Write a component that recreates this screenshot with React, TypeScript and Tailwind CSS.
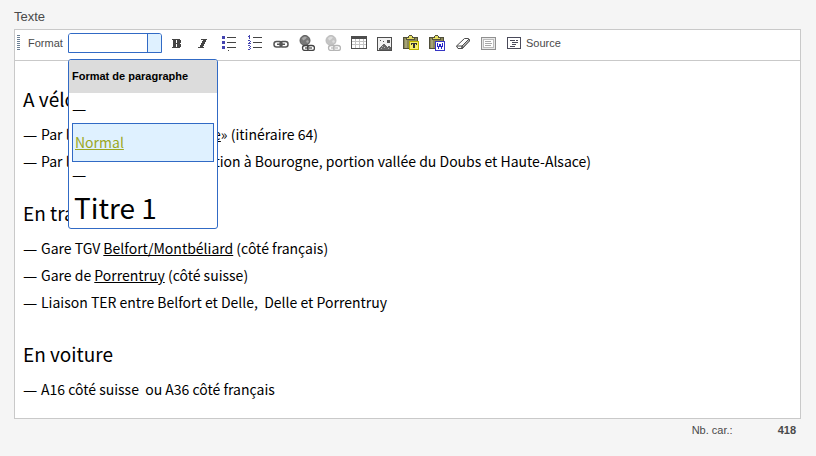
import React, { useState } from 'react';

type IconProps = { children: React.ReactNode };

function Icon({ children }: IconProps) {
  return (
    <svg width="16" height="16" viewBox="0 0 16 16" fill="none" shapeRendering="crispEdges" aria-hidden="true">
      {children}
    </svg>
  );
}

function Globe({ muted = false }: { muted?: boolean }) {
  const dark = muted ? '#b5b5b5' : '#444444';
  return (
    <g shapeRendering="auto">
      <circle cx="6" cy="5.5" r="5" fill={muted ? '#c4c4c4' : '#777777'} stroke={muted ? '#bbbbbb' : '#5a5a5a'} />
      <path d="M3 3l3-1.5 2 1-2 2-2 1zM7 6l2-1 1 2-2 1z" fill={muted ? '#dddddd' : '#a8a8a8'} />
      <rect x="3.5" y="10.5" width="7" height="5" rx="2.5" fill="#ffffff" stroke={dark} strokeWidth="1.3" />
      <rect x="8.5" y="10.5" width="7" height="5" rx="2.5" fill="#ffffff" stroke={dark} strokeWidth="1.3" />
      <path d="M6 13h7" stroke={dark} strokeWidth="1.2" />
    </g>
  );
}

function Clipboard() {
  return (
    <>
      <path d="M.5 2.5h14v11H.5z" fill="#8a8858" stroke="#4f4e3a" />
      <path d="M2 4h2v9H2z" fill="#a5a377" />
      <path d="M3 3h2V1h1V0h3v1h1v2h2v2H3z" fill="#55533a" />
      <path d="M4 3h7v1H4zM6 1h3v2H6z" fill="#e6df62" />
    </>
  );
}

const tools = [
  {
    label: 'Gras',
    icon: (
      <path
        d="M3 4h8v1h1v3h-1v1h1v3h-1v1H3v-1h1V5H3zM7 5v3h1V5zM7 9v3h1V9z"
        fill="#444444"
        fillRule="evenodd"
      />
    ),
  },
  {
    label: 'Italique',
    icon: <path d="M6 4h6v1h-1v2h-1v2H9v2H8v1h1v1H3v-1h2v-2h1V8h1V6h1V5H6z" fill="#444444" />,
  },
  {
    label: 'Liste à puces',
    icon: (
      <>
        <path d="M1 1h3v3H1zM1 6h3v3H1zM1 11h3v3H1z" fill="#4444b0" />
        <path d="M6 2h9v1H6zM6 7h9v1H6zM6 12h9v1H6zM7 15h1v1H7z" fill="#444444" />
      </>
    ),
  },
  {
    label: 'Liste numérotée',
    icon: (
      <>
        <path
          d="M2 0h1v4H2zM1 1h1v1H1zM1 5h2v1H1zM3 6h1v1H3zM2 7h1v1H2zM1 8h3v1H1zM1 10h2v1H1zM3 11h1v1H3zM2 12h1v1H2zM3 13h1v1H3zM1 14h2v1H1z"
          fill="#4444b0"
        />
        <path d="M6 2h9v1H6zM6 7h9v1H6zM6 12h9v1H6z" fill="#444444" />
      </>
    ),
  },
  {
    label: 'Lien',
    icon: (
      <g stroke="#555555" strokeWidth="1.5" shapeRendering="auto">
        <rect x="1" y="6.5" width="8" height="5.5" rx="2.5" />
        <rect x="7" y="6.5" width="8" height="5.5" rx="2.5" />
        <path d="M4 9.25h8" />
      </g>
    ),
  },
  { label: 'Lien externe', icon: <Globe /> },
  { label: 'Supprimer le lien', icon: <Globe muted /> },
  {
    label: 'Tableau',
    icon: (
      <>
        <path d="M0 1h16v13H0z" fill="#4d4d4d" />
        <path d="M1 4h14v9H1z" fill="#c4c4c4" />
        <path
          d="M1 4h3v2H1zM5 4h3v2H5zM9 4h3v2H9zM13 4h2v2h-2zM1 7h3v2H1zM5 7h3v2H5zM9 7h3v2H9zM13 7h2v2h-2zM1 10h3v3H1zM5 10h3v3H5zM9 10h3v3H9zM13 10h2v3h-2z"
          fill="#ffffff"
        />
      </>
    ),
  },
  {
    label: 'Image',
    icon: (
      <>
        <path d="M.5 2.5h14v13H.5z" fill="#f1f1f1" stroke="#4d4d4d" />
        <path d="M2 15v-2h1v-1h1v-1h1v-1h1V9h2v1h1v1h1v1h1v-1h2v1h1v3z" fill="#666666" />
        <path d="M5 11h1v1H5zM7 12h1v1H7zM11 13h1v1h-1zM4 13h1v1H4z" fill="#b0b0b0" />
        <path d="M10 5h3v3h-3zM3 5h1v1H3zM6 6h1v1H6z" fill="#555555" />
      </>
    ),
  },
  {
    label: 'Coller comme texte',
    icon: (
      <>
        <Clipboard />
        <path d="M6.5 6.5h9v8h-9z" fill="#f7f06a" stroke="#b8b000" />
        <path d="M8 8h6v2h-1V9h-1v4h-2V9H9v1H8z" fill="#333333" />
      </>
    ),
  },
  {
    label: 'Coller de Word',
    icon: (
      <>
        <Clipboard />
        <path d="M6.5 6.5h9v9h-9z" fill="#ffffff" stroke="#3535c4" />
        <path d="M8 8h1v3h1V9h2v2h1V8h1v4h-1v2h-1v-2h-2v2H9v-2H8z" fill="#2424c8" />
      </>
    ),
  },
  {
    label: 'Supprimer la mise en forme',
    icon: (
      <g stroke="#4d4d4d" shapeRendering="auto">
        <path d="M9.5 3.5h4l1 2-7 8H3L1.5 11z" fill="#ffffff" />
        <path d="M7 11l7-7 .5 2L7 13.5z" fill="#bcbcbc" />
        <path d="M1.5 11H7v2.5" />
      </g>
    ),
  },
  {
    label: 'Afficher les blocs',
    icon: (
      <>
        <path d="M.5 2.5h14v12H.5z" fill="#e8e8e8" stroke="#909090" />
        <path d="M2.5 4.5h10v8h-10z" fill="#ffffff" stroke="#bcbcbc" />
        <path d="M4 6h6v1H4zM4 8h7v1H4zM4 10h6v1H4z" fill="#a8a8a8" />
      </>
    ),
  },
];

const sections = [
  {
    title: 'A vélo',
    items: [
      <>
        Par la via <a href="#francovelosuisse" className="underline">«Francovélosuisse</a>» (itinéraire 64)
      </>,
      <>Par l'Eurovéloroute 6 (jonction à Bourogne, portion vallée du Doubs et Haute-Alsace)</>,
    ],
  },
  {
    title: 'En train',
    items: [
      <>
        Gare TGV <a href="#belfort" className="underline">Belfort/Montbéliard</a> (côté français)
      </>,
      <>
        Gare de <a href="#porrentruy" className="underline">Porrentruy</a> (côté suisse)
      </>,
      <>Liaison TER entre Belfort et Delle,&nbsp; Delle et Porrentruy</>,
    ],
  },
  {
    title: 'En voiture',
    items: [<>A16 côté suisse&nbsp; ou A36 côté français</>],
  },
];

const contentFont = 'font-["Noto_Sans_CJK_SC",Lato,sans-serif]';

function FormatPanel({ onPick }: { onPick: (value: string) => void }) {
  return (
    <div
      className={`absolute left-0 top-[26px] z-10 w-[150px] overflow-hidden rounded-[3px] border border-[#316ac5] bg-white text-black ${contentFont}`}
    >
      <h2 className='bg-[#dcdcdc] px-[3px] font-["Liberation_Sans",Arial,sans-serif] text-[11px] font-bold leading-[33px]'>
        Format de paragraphe
      </h2>
      <ul className="px-[3px]">
        <li>
          <span className="block text-[16px] leading-[30px]">—</span>
          <button
            onClick={() => onPick('Normal')}
            className="block w-full border border-[#316ac5] bg-[#dff1ff] px-[2px] text-left text-[14px] leading-[37px] text-[#9ba823] underline"
          >
            Normal
          </button>
        </li>
        <li>
          <span className="block text-[16px] leading-[25px]">—</span>
          <button onClick={() => onPick('Titre 1')} className="block w-full px-[2px] text-left text-[28px] leading-[41px]">
            Titre 1
          </button>
        </li>
      </ul>
    </div>
  );
}

export default function App() {
  const [format, setFormat] = useState('');

  return (
    <div className='min-h-screen bg-[#f5f5f5] px-[14px] pt-2 font-["Liberation_Sans",Arial,sans-serif] text-[#4a4a4a]'>
      <h1 className="pb-[3px] text-[13px] leading-[18px]">Texte</h1>

      <div className="mr-px border border-[#c9c9c9] bg-white">
        {/* Toolbar */}
        <div className="flex h-[31px] items-center border-b border-[#c9c9c9] pb-1 pl-[2px] text-[11px]">
          <span className="mr-2 h-4 w-[3px] bg-[repeating-linear-gradient(#6b7f94_0_1px,#ffffff_1px_2px)]" />
          <label htmlFor="format" className="mr-[6px] w-[34px]">
            Format
          </label>
          <div className="relative mr-[2px]">
            <div className="flex h-5 w-[94px] overflow-hidden rounded-t-[3px] border border-[#316ac5]">
              <select
                id="format"
                value={format}
                onChange={(e) => setFormat(e.target.value)}
                className="min-w-0 flex-1 appearance-none bg-white"
              >
                <option value="" />
                <option>Normal</option>
                <option>Titre 1</option>
              </select>
              <span className="w-[14px] border-l border-[#316ac5] bg-[#dff1ff]" />
            </div>
            <FormatPanel onPick={setFormat} />
          </div>
          {tools.map((tool) => (
            <button key={tool.label} aria-label={tool.label} className="flex w-[26px] justify-center">
              <Icon>{tool.icon}</Icon>
            </button>
          ))}
          <button className="flex items-center gap-[3px] pl-[5px]">
            <Icon>
              <path d="M.5 2.5h13v11H.5z" fill="#ffffff" stroke="#4a4a5a" />
              <path d="M3 5h5v1H3zM5 7h6v1H5zM5 9h4v1H5zM3 11h5v1H3zM9 5h2v1H9z" fill="#4a4a5a" />
            </Icon>
            Source
          </button>
        </div>

        {/* Editable content */}
        <div className={`px-2 pb-[15px] pt-6 text-black ${contentFont}`}>
          {sections.map((section) => (
            <section key={section.title} className="mb-6 last:mb-0">
              <h2 className="mb-[9px] text-[19px] leading-[27px]">{section.title}</h2>
              <ul className="text-[14px] leading-[27px]">
                {section.items.map((item, i) => (
                  <li key={i} className="flex">
                    <span className="w-[18px] shrink-0 text-[16px]">—</span>
                    <p>{item}</p>
                  </li>
                ))}
              </ul>
            </section>
          ))}
        </div>
      </div>

      <div className="flex justify-end gap-[45px] pr-[6px] pt-[3px] text-[11px] leading-4">
        <span>Nb. car.:</span>
        <strong>418</strong>
      </div>
    </div>
  );
}
